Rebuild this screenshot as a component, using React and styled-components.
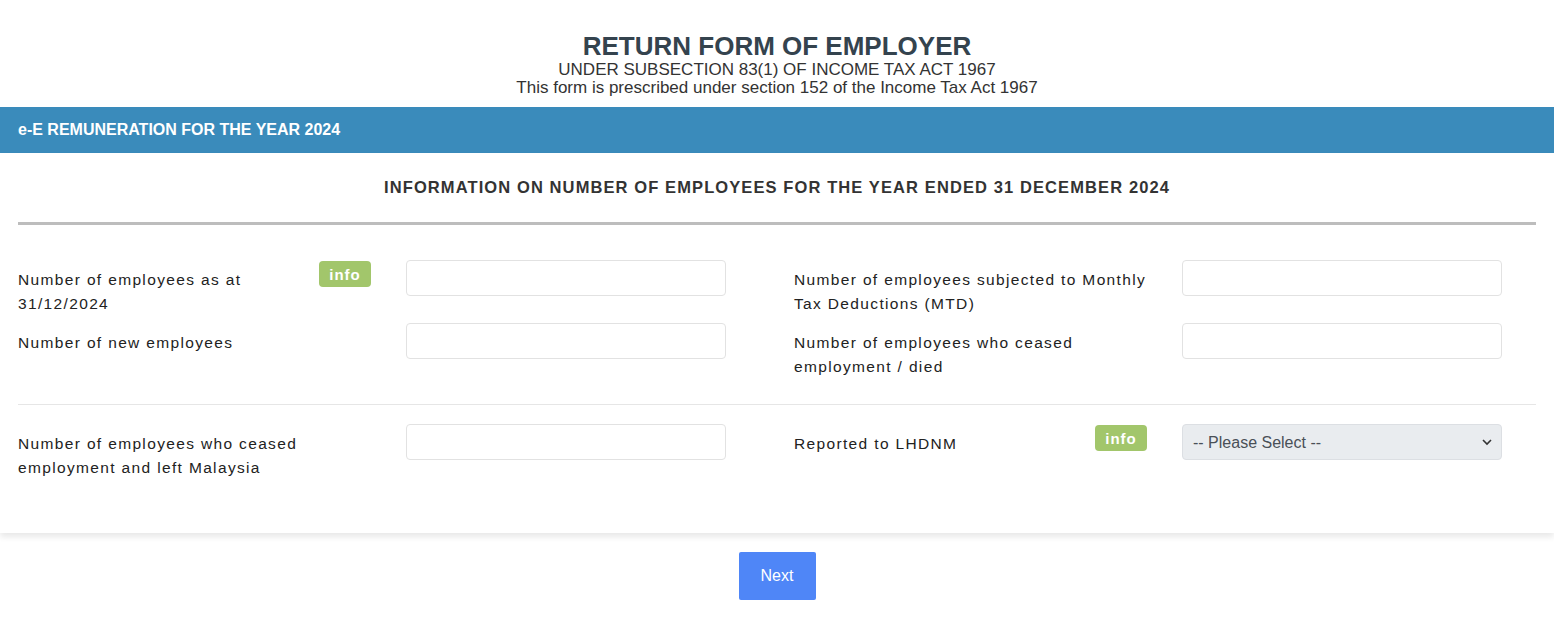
import React from "react";
import styled, { createGlobalStyle } from "styled-components";

const Global = createGlobalStyle`
  html, body { margin: 0; padding: 0; background: #fff; }
  body { font-family: "Liberation Sans", Arial, sans-serif; color: #222; }
  * { box-sizing: border-box; }
`;

const Page = styled.div`
  width: 1554px;
  display: flex;
  flex-direction: column;
`;

const Header = styled.header`
  display: flex;
  flex-direction: column;
  align-items: center;
  padding: 32px 0 10px;
`;

const Title = styled.h1`
  margin: 0;
  font-size: 26px;
  line-height: 29px;
  font-weight: 700;
  color: #34434e;
`;

const SubLine = styled.div`
  font-size: 17px;
  line-height: 18px;
  color: #333;
`;

const Bar = styled.div`
  height: 46px;
  background: #3a8bbb;
  color: #fff;
  font-weight: 700;
  font-size: 16px;
  display: flex;
  align-items: center;
  padding-left: 18px;
`;

const Panel = styled.section`
  background: #fff;
  box-shadow: 0 4px 6px rgba(0, 0, 0, 0.09);
  padding: 24px 18px 53px;
  display: flex;
  flex-direction: column;
`;

const Heading = styled.h2`
  margin: 0;
  text-align: center;
  font-size: 16.5px;
  line-height: 20px;
  font-weight: 700;
  letter-spacing: 1.1px;
  color: #333;
`;

const ThickRule = styled.hr`
  margin: 25px 0 35px;
  border: 0;
  height: 3px;
  background: #bdbdbd;
`;

const ThinRule = styled.hr`
  margin: 25px 0 19px;
  border: 0;
  height: 1px;
  background: #e6e6e6;
`;

const Grid = styled.div`
  display: grid;
  grid-template-columns: 776px 1fr;
  row-gap: 7px;
`;

const Field = styled.div`
  display: grid;
  grid-template-columns: 388px 320px;
  align-items: start;
`;

const LabelCell = styled.div`
  padding: 0 35px 0 0;
  display: flow-root;
`;

const LabelText = styled.label`
  display: block;
  padding-top: 8px;
  font-size: 15.5px;
  line-height: 24px;
  letter-spacing: 1.35px;
  color: #222;
`;

const InfoBadge = styled.span`
  float: right;
  margin-top: 1px;
  margin-left: 12px;
  width: 52px;
  height: 26px;
  border-radius: 4px;
  background: #a2c66b;
  color: #fff;
  font-weight: 700;
  font-size: 15px;
  letter-spacing: 1px;
  display: flex;
  align-items: center;
  justify-content: center;
`;

const Input = styled.input`
  width: 320px;
  height: 36px;
  border: 1px solid #e2e2e2;
  border-radius: 4px;
  background: #fff;
  padding: 0 10px;
  font: inherit;
  outline: none;
`;

const SelectBox = styled.div`
  position: relative;
  width: 320px;
  height: 36px;
`;

const Select = styled.select`
  appearance: none;
  width: 100%;
  height: 100%;
  border: 1px solid #dcdfe3;
  border-radius: 4px;
  background: #e9ecef;
  padding: 0 10px;
  font-family: "Liberation Sans", Arial, sans-serif;
  font-size: 16px;
  color: #495057;
  outline: none;
`;

const Chevron = styled.svg`
  position: absolute;
  right: 9px;
  top: 13px;
  pointer-events: none;
`;

const Footer = styled.div`
  display: flex;
  justify-content: center;
  padding-top: 19px;
`;

const Button = styled.button`
  width: 77px;
  height: 48px;
  border: 0;
  border-radius: 2px;
  background: #4f86f7;
  color: #fff;
  font-family: "Liberation Sans", Arial, sans-serif;
  font-size: 16px;
  cursor: pointer;
`;

function FormField({ label, info, children }) {
  return (
    <Field>
      <LabelCell>
        {info && <InfoBadge>info</InfoBadge>}
        <LabelText>{label}</LabelText>
      </LabelCell>
      {children}
    </Field>
  );
}

export default function App() {
  return (
    <Page>
      <Global />
      <Header>
        <Title>RETURN FORM OF EMPLOYER</Title>
        <SubLine>UNDER SUBSECTION 83(1) OF INCOME TAX ACT 1967</SubLine>
        <SubLine>This form is prescribed under section 152 of the Income Tax Act 1967</SubLine>
      </Header>
      <Bar>e-E REMUNERATION FOR THE YEAR 2024</Bar>
      <Panel>
        <Heading>INFORMATION ON NUMBER OF EMPLOYEES FOR THE YEAR ENDED 31 DECEMBER 2024</Heading>
        <ThickRule />
        <Grid>
          <FormField label="Number of employees as at 31/12/2024" info>
            <Input />
          </FormField>
          <FormField label="Number of employees subjected to Monthly Tax Deductions (MTD)">
            <Input />
          </FormField>
          <FormField label="Number of new employees">
            <Input />
          </FormField>
          <FormField label="Number of employees who ceased employment / died">
            <Input />
          </FormField>
        </Grid>
        <ThinRule />
        <Grid>
          <FormField label="Number of employees who ceased employment and left Malaysia">
            <Input />
          </FormField>
          <FormField label="Reported to LHDNM" info>
            <SelectBox>
              <Select defaultValue="">
                <option value="">-- Please Select --</option>
                <option value="Y">Yes</option>
                <option value="N">No</option>
              </Select>
              <Chevron width="12" height="10" viewBox="0 0 12 10">
                <path d="M2 3l4 4 4-4" fill="none" stroke="#333" strokeWidth="1.6" />
              </Chevron>
            </SelectBox>
          </FormField>
        </Grid>
      </Panel>
      <Footer>
        <Button>Next</Button>
      </Footer>
    </Page>
  );
}
